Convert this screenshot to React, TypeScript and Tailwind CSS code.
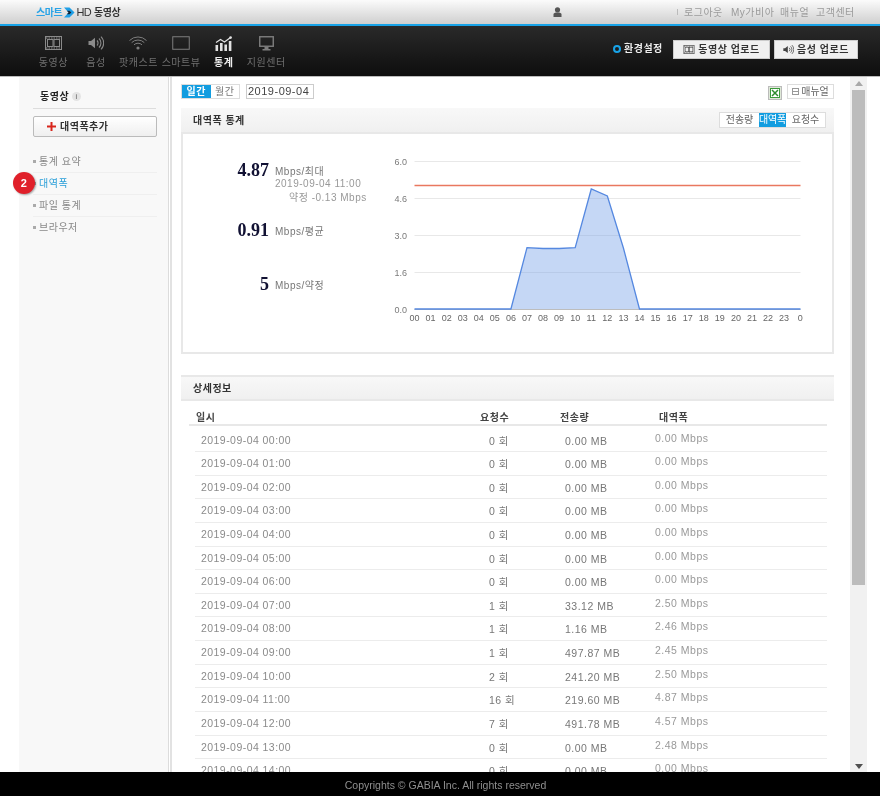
import React from "react";

const FONT = "[font-family:'Liberation_Sans','Noto_Sans_CJK_KR',sans-serif]";

const Film = ({ c = "#8a8a8a", w = 17, h = 14 }: { c?: string; w?: number; h?: number }) => (
  <svg width={w} height={h} viewBox="0 0 17 14" fill="none">
    <rect x="0.5" y="0.5" width="16" height="13" stroke={c} />
    <rect x="2.5" y="3.5" width="5.5" height="7" stroke={c} />
    <rect x="9" y="3.5" width="5.5" height="7" stroke={c} />
    <path d="M1 2h15M1 12h15" stroke={c} strokeDasharray="1.5 1" />
  </svg>
);
const Speaker = ({ c = "#8a8a8a", s = 16 }: { c?: string; s?: number }) => (
  <svg width={s} height={s} viewBox="0 0 16 16" fill="none">
    <path d="M0.5 6h2.5l4-3.2v10.4l-4-3.2H0.5z" fill={c} />
    <path d="M9 5.5a3.5 3.5 0 0 1 0 5M11 3.5a6.2 6.2 0 0 1 0 9M13 1.6a9 9 0 0 1 0 12.8" stroke={c} strokeWidth="1.1" />
  </svg>
);
const Wifi = () => (
  <svg width="18" height="14" viewBox="0 0 18 14" fill="none" stroke="#7e7e7e" strokeWidth="1">
    <path d="M0.5 4.5a12 12 0 0 1 17 0M2.7 6.6a9 9 0 0 1 12.6 0M5 8.8a5.8 5.8 0 0 1 8 0" />
    <circle cx="9" cy="12" r="1.6" fill="#7e7e7e" stroke="none" />
  </svg>
);
const Screen = () => (
  <svg width="18" height="14" viewBox="0 0 18 14" fill="none">
    <rect x="0.75" y="0.75" width="16.5" height="12.5" stroke="#7e7e7e" strokeWidth="1" />
  </svg>
);
const Bars = () => (
  <svg width="17" height="15" viewBox="0 0 17 15" fill="none">
    <rect x="0.5" y="9" width="2.6" height="6" fill="#e2e2e2" />
    <rect x="5" y="7" width="2.6" height="8" fill="#e2e2e2" />
    <rect x="9.4" y="8.5" width="2.6" height="6.5" fill="#e2e2e2" />
    <rect x="13.8" y="5" width="2.6" height="10" fill="#e2e2e2" />
    <path d="M1 6.5l4.5-3 4 2.5 6-4.5" stroke="#e2e2e2" strokeWidth="1.2" />
    <circle cx="15.6" cy="1.6" r="1.3" fill="#e2e2e2" />
  </svg>
);
const Desktop = () => (
  <svg width="15" height="15" viewBox="0 0 15 15" fill="none">
    <rect x="0.75" y="0.75" width="13.5" height="9.5" stroke="#7e7e7e" strokeWidth="1.4" />
    <rect x="5.5" y="11" width="4" height="2" fill="#7e7e7e" />
    <rect x="3.5" y="13" width="8" height="1.5" fill="#7e7e7e" />
  </svg>
);

const navItems = [
  { label: "동영상", icon: <Film /> },
  { label: "음성", icon: <Speaker /> },
  { label: "팟캐스트", icon: <Wifi /> },
  { label: "스마트뷰", icon: <Screen /> },
  { label: "통계", icon: <Bars />, active: true },
  { label: "지원센터", icon: <Desktop /> },
];

const rows = [
  ["2019-09-04 00:00", "0 회", "0.00 MB", "0.00 Mbps"],
  ["2019-09-04 01:00", "0 회", "0.00 MB", "0.00 Mbps"],
  ["2019-09-04 02:00", "0 회", "0.00 MB", "0.00 Mbps"],
  ["2019-09-04 03:00", "0 회", "0.00 MB", "0.00 Mbps"],
  ["2019-09-04 04:00", "0 회", "0.00 MB", "0.00 Mbps"],
  ["2019-09-04 05:00", "0 회", "0.00 MB", "0.00 Mbps"],
  ["2019-09-04 06:00", "0 회", "0.00 MB", "0.00 Mbps"],
  ["2019-09-04 07:00", "1 회", "33.12 MB", "2.50 Mbps"],
  ["2019-09-04 08:00", "1 회", "1.16 MB", "2.46 Mbps"],
  ["2019-09-04 09:00", "1 회", "497.87 MB", "2.45 Mbps"],
  ["2019-09-04 10:00", "2 회", "241.20 MB", "2.50 Mbps"],
  ["2019-09-04 11:00", "16 회", "219.60 MB", "4.87 Mbps"],
  ["2019-09-04 12:00", "7 회", "491.78 MB", "4.57 Mbps"],
  ["2019-09-04 13:00", "0 회", "0.00 MB", "2.48 Mbps"],
  ["2019-09-04 14:00", "0 회", "0.00 MB", "0.00 Mbps"],
];

const Chart = () => {
  const x0 = 34.5;
  const step = 16.07;
  const vals = [148, 148, 148, 148, 148, 148, 148, 86.7, 87.5, 87.5, 86.7, 28, 35, 87, 148, 148, 148, 148, 148, 148, 148, 148, 148, 148];
  const pts = vals.map((v, i) => `${x0 + i * step},${v + 1}`).join(" ");
  const end = 420.5;
  const area = `${x0},149 ${pts} ${end},149`;
  const yLabels: [string, number][] = [
    ["6.0", 1],
    ["4.6", 38],
    ["3.0", 75],
    ["1.6", 112],
    ["0.0", 149],
  ];
  const hrs = Array.from({ length: 24 }, (_, i) => String(i).padStart(2, "0"));
  const common = { fontSize: 9, fontFamily: "Liberation Sans", letterSpacing: 0 };
  return (
    <svg width="440" height="190" viewBox="0 -9 440 190" className="shrink-0 self-start -mt-[10px]">
      {yLabels.map(([t, y]) => (
        <g key={t}>
          <line x1={x0} x2={end} y1={y + 0.5} y2={y + 0.5} stroke={t === "0.0" ? "#bdbdbd" : "#e8e8e8"} strokeWidth="1" />
          <text x="27" y={y + 3.5} textAnchor="end" fill="#7a7a7a" {...common}>{t}</text>
        </g>
      ))}
      <polygon points={area} fill="#7ea6e8" fillOpacity="0.45" />
      <polyline points={pts + ` ${end},149`} fill="none" stroke="#5588e0" strokeWidth="1.3" />
      <line x1={x0} x2={end} y1="25.5" y2="25.5" stroke="#e9785f" strokeWidth="1.3" />
      {hrs.map((h, i) => (
        <text key={h} x={x0 + i * step} y="161" textAnchor="middle" fill="#666" {...common}>{h}</text>
      ))}
      <text x={x0 + 24 * step} y="161" textAnchor="middle" fill="#666" {...common}>0</text>
    </svg>
  );
};

const Stat = ({ num, unit, mt }: { num: string; unit: string; mt: string }) => (
  <div className={`flex items-baseline justify-end pr-[13px] ${mt}`}>
    <span className="font-['Liberation_Serif',serif] text-[18px] leading-[20px] font-bold text-[#111133] mr-[6px] tracking-normal">{num}</span>
    <span className="text-[10px] leading-[12px] text-[#777] w-[92px] -translate-y-[1px]">{unit}</span>
  </div>
);

export default function App() {
  return (
    <div className={`relative h-[796px] w-[880px] overflow-hidden bg-white flex flex-col ${FONT} tracking-[0.5px] blur-[0.4px]`}>
      {/* top bar */}
      <header className="h-[24px] shrink-0 bg-gradient-to-b from-[#fbfbfb] to-[#cfcfcf] flex items-center pl-[36px] pr-[24px]">
        <span className="text-[10px] font-bold text-[#2aa3e6] tracking-[-0.4px]">스마트</span>
        <svg width="11" height="11" viewBox="0 0 12 11" className="ml-[2px]">
          <path d="M0 0h6l5.5 5.5L6 11H0l5-5.5z" fill="#1f9fe6" />
          <path d="M3 3.5h3l2 2-2 2H3l2-2z" fill="#123" />
        </svg>
        <span className="text-[11px] text-[#333] ml-[1px] tracking-[-0.7px]">HD</span>
        <span className="text-[10px] font-bold text-[#333] ml-[3px] tracking-[-0.4px]">동영상</span>
        <svg width="9" height="10" viewBox="0 0 9 10" className="ml-[433px]">
          <circle cx="4.5" cy="2.8" r="2.6" fill="#555" />
          <path d="M0.5 10V7.5C0.5 6 2 5.5 4.5 5.5S8.5 6 8.5 7.5V10z" fill="#555" />
        </svg>
        <div className="ml-auto flex items-center text-[10px] text-[#9a9a9a] whitespace-nowrap">
          <span className="w-px h-[6px] bg-[#bbb] mr-[6px]" />
          <span className="w-[40px]">로그아웃</span>
          <span className="ml-[7px] w-[43px]">My가비아</span>
          <span className="ml-[6px] w-[30px]">매뉴얼</span>
          <span className="ml-[6px] w-[40px]">고객센터</span>
        </div>
      </header>
      <div className="h-[2px] shrink-0 bg-[#18a3e8]" />

      {/* nav */}
      <nav className="h-[50px] shrink-0 bg-gradient-to-b from-[#2a2a2a] to-[#0e0e0e] flex items-start pl-[32px] pr-[22px]">
        {navItems.map((n) => (
          <div key={n.label} className="w-[42.6px] flex flex-col items-center pt-[9px]">
            <div className="h-[16px] flex items-center justify-center">{n.icon}</div>
            <span className={`mt-[5px] text-[10px] leading-[14px] whitespace-nowrap ${n.active ? "font-bold text-[#eeeeee]" : "text-[#6f6f6f]"}`}>{n.label}</span>
          </div>
        ))}
        <div className="ml-auto flex items-center pt-[13px]">
          <svg width="8" height="8" viewBox="0 0 8 8">
            <circle cx="4" cy="4" r="3" fill="none" stroke="#18a3e8" strokeWidth="2" />
          </svg>
          <span className="ml-[3px] w-[38px] text-[10px] font-bold text-[#eee] leading-[20px] whitespace-nowrap">환경설정</span>
          <button className="ml-[11px] w-[97px] h-[19px] bg-[#f0f0f0] border border-[#ccc] flex items-center justify-center gap-[3px] text-[10px] font-bold text-[#333] whitespace-nowrap">
            <Film c="#444" w={12} h={9} />
            동영상 업로드
          </button>
          <button className="ml-[4px] w-[84px] h-[19px] bg-[#f0f0f0] border border-[#ccc] flex items-center justify-center gap-[3px] text-[10px] font-bold text-[#333] whitespace-nowrap">
            <Speaker c="#444" s={11} />
            음성 업로드
          </button>
        </div>
      </nav>
      <div className="h-px shrink-0 bg-[#bcbcbc]" />

      <div className="flex-1 min-h-0 flex pl-[19px]">
        {/* sidebar */}
        <aside className="relative w-[150px] shrink-0 bg-[#f8f8f8] border-r border-[#dcdcdc] pl-[14px] pt-[13px]">
          <div className="w-[123px] h-[19px] border-b border-[#ddd] flex items-start pl-[7px]">
            <span className="text-[10px] font-bold text-[#222] leading-[14px]">동영상</span>
            <span className="ml-[3px] mt-[2px] w-[9px] h-[9px] rounded-full bg-[#e4e4e4] text-[7px] leading-[9px] text-center text-[#555]">i</span>
          </div>
          <button className="mt-[7px] w-[124px] h-[21px] rounded-[2px] border border-[#bbb] bg-gradient-to-b from-white to-[#efefef] flex items-center pl-[13px] text-[10px] font-bold text-[#333] whitespace-nowrap">
            <svg width="9" height="9" viewBox="0 0 9 9" className="mr-[4px]">
              <path d="M3.5 0h2v3.5H9v2H5.5V9h-2V5.5H0v-2h3.5z" fill="#d8261c" />
            </svg>
            대역폭추가
          </button>
          <ul className="mt-[14px] w-[124px] text-[10px] text-[#888]">
            {["통계 요약", "대역폭", "파일 통계", "브라우저"].map((t, i) => (
              <li key={t} className={`h-[22px] flex items-center ${i < 3 ? "border-b border-[#efefef]" : "pb-[1px]"} ${i === 1 ? "text-[#2a9fd8]" : ""}`}>
                <span className="w-[3px] h-[3px] bg-[#aaa] mr-[3px]" />
                {t}
              </li>
            ))}
          </ul>
          <span className="absolute left-[-6px] top-[95px] w-[22px] h-[22px] rounded-full bg-[#e0202a] shadow-[1px_1px_2px_rgba(0,0,0,0.35)] text-white font-bold text-[11px] leading-[22px] text-center">2</span>
        </aside>
        <div className="w-px shrink-0 bg-white" />
        <div className="w-[2px] shrink-0 bg-[#e2e2e2]" />

        {/* main */}
        <main className="w-[678px] shrink-0 overflow-hidden pl-[9px] pr-[16px] pt-[6px]">
          <div className="flex items-center h-[16px]">
            <div className="flex h-[15px] w-[59px] border border-[#ddd] text-[10px] leading-[13px] text-center">
              <span className="flex-1 bg-[#129de0] text-white font-bold">일간</span>
              <span className="flex-1 text-[#777]">월간</span>
            </div>
            <span className="ml-[6px] w-[68px] h-[15px] border border-[#ccc] pl-[1px] text-[11px] leading-[13px] text-[#444] whitespace-nowrap">2019-09-04</span>
            <svg width="14" height="14" viewBox="0 0 14 14" className="ml-auto mr-[5px] mt-[3px]">
              <rect x="0.5" y="0.5" width="13" height="13" fill="#dfe9d8" stroke="#bbb" />
              <rect x="2.5" y="2.5" width="9" height="9" fill="#fff" stroke="#3c9a3c" />
              <path d="M4 4l6 6M10 4l-6 6" stroke="#2c8a2c" strokeWidth="1.5" />
            </svg>
            <span className="w-[47px] h-[15px] border border-[#ddd] flex items-center justify-center text-[10px] text-[#666] whitespace-nowrap tracking-normal">
              <svg width="7" height="7" viewBox="0 0 7 7" className="mr-[2px]">
                <rect x="0.5" y="0.5" width="6" height="6" fill="none" stroke="#999" />
                <path d="M1 3.5h5" stroke="#999" />
              </svg>
              매뉴얼
            </span>
          </div>

          <div className="mt-[9px] h-[24px] bg-gradient-to-b from-[#f8f8f8] to-[#f0f0f0] flex items-center pl-[12px] pr-[8px]">
            <span className="text-[10px] font-bold text-[#333]">대역폭 통계</span>
            <div className="ml-auto flex h-[16px] border border-[#ddd] bg-white text-[10px] leading-[14px] text-center text-[#666] whitespace-nowrap tracking-normal">
              <span className="w-[39px]">전송량</span>
              <span className="w-[27px] bg-[#129de0] text-white tracking-[-0.2px]">대역폭</span>
              <span className="w-[39px]">요청수</span>
            </div>
          </div>

          <section className="h-[222px] border-2 border-[#e8e8e8] flex pt-[26px]">
            <div className="w-[197px] shrink-0">
              <Stat num="4.87" unit="Mbps/최대" mt="" />
              <div className="pl-[92px] text-[10px] leading-[13px] text-[#999] whitespace-nowrap -mt-[3px]">2019-09-04 11:00</div>
              <div className="pl-[106px] text-[10px] leading-[14px] text-[#999] whitespace-nowrap mt-[1px]">약정 -0.13 Mbps</div>
              <Stat num="0.91" unit="Mbps/평균" mt="mt-[15px]" />
              <Stat num="5" unit="Mbps/약정" mt="mt-[34px]" />
            </div>
            <div className="pt-[1px] shrink-0 self-start">
              <Chart />
            </div>
          </section>

          <div className="mt-[21px] h-[26px] border-t-2 border-b-2 border-[#e8e8e8] bg-gradient-to-b from-[#f8f8f8] to-[#f0f0f0] flex items-center pl-[12px]">
            <span className="text-[10px] font-bold text-[#333]">상세정보</span>
          </div>

          <div className="ml-[8px] w-[638px] mt-[10px] h-[15px] border-b-2 border-[#e8e8e8] flex text-[10px] font-bold text-[#444] leading-[13px]">
            <span className="pl-[7px] w-[291px]">일시</span>
            <span className="w-[80px]">요청수</span>
            <span className="w-[99px]">전송량</span>
            <span>대역폭</span>
          </div>
          <div className="ml-[14px] w-[632px]">
            {rows.map((r, i) => (
              <div key={r[0]} className={`${i === 0 ? "h-[26px] pt-[4px]" : "h-[23.65px]"} border-b border-[#ececec] flex items-center text-[10.5px] text-[#8a8a8a] whitespace-nowrap`}>
                <span className="pl-[6px] w-[294px] pt-[1px] tracking-[0.45px]">{r[0]}</span>
                <span className="w-[76px] pt-[3px] text-[#777]">{r[1]}</span>
                <span className="w-[90px] pt-[3px] text-[#777]">{r[2]}</span>
                <span className="pb-[3px] text-[#999]">{r[3]}</span>
              </div>
            ))}
          </div>
        </main>

        {/* scrollbar */}
        <div className="w-[17px] shrink-0 bg-[#f1f1f1] flex flex-col items-center pt-[4px] pb-[3px]">
          <svg width="8" height="5" viewBox="0 0 8 5"><path d="M4 0l4 5H0z" fill="#a8a8a8" /></svg>
          <div className="w-[13px] h-[495px] mt-[4px] bg-[#bcbcbc]" />
          <svg width="8" height="5" viewBox="0 0 8 5" className="mt-auto"><path d="M0 0h8L4 5z" fill="#505050" /></svg>
        </div>
      </div>

      <footer className="h-[24px] shrink-0 bg-black pl-[11px] text-center text-[10.5px] leading-[26px] text-[#8f8f8f] tracking-normal">
        Copyrights © GABIA Inc. All rights reserved
      </footer>
    </div>
  );
}
